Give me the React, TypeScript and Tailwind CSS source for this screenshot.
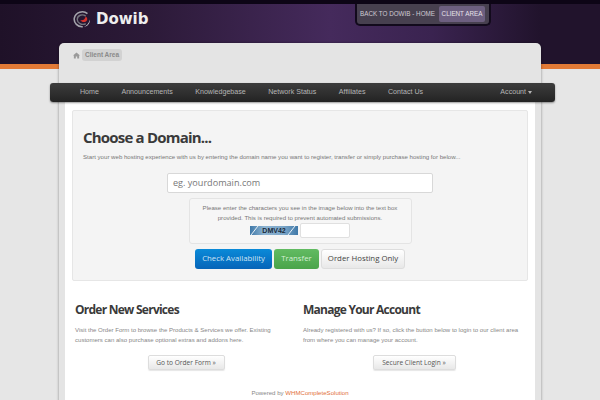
const navLeft = ["Home", "Announcements", "Knowledgebase", "Network Status", "Affiliates", "Contact Us"];

function Logo() {
  return (
    <svg width="17" height="17" viewBox="0 0 20 20" fill="none">
      <path d="M17 3C12 -1 3 1 1.500 8.500c-.8 5.500 4 10.500 10 10" stroke="#a4a4ac" strokeWidth="1.800" />
      <path d="M15 6C11 3 5 5 5 10c0 4 5 7 10 5" stroke="#75757e" strokeWidth="1.600" />
      <path d="M15 6.500c3 2 2 6-1.500 6.500-2.500.2-4-1-5-2.500 2.500 1 5 .5 6.500-4z" fill="#d8322c" />
      <path d="M20 10c0 5-3.500 8.500-7.500 9 3.500-1.500 6-4 7.500-9z" fill="#d4d4d8" />
    </svg>
  );
}

function HomeIcon() {
  return (
    <svg width="7" height="7" viewBox="0 0 8 8" fill="#9a9a9a">
      <path d="M4 .5 0 4h1v3.500h2.200V5h1.600v2.500H7V4h1z" />
    </svg>
  );
}

function Column({ title, lines, button, buttonWidth }: { title: string; lines: string[]; button: string; buttonWidth: string }) {
  return (
    <div>
      <h2 className="text-[12px] leading-[18px] font-bold tracking-[-0.75px] text-[#3a3a3a] font-['Open_Sans',sans-serif]">{title}</h2>
      <p className="mt-[7px] text-[6.05px] leading-[9.5px] whitespace-nowrap text-[#888888]">
        {lines[0]}
        <br />
        {lines[1]}
      </p>
      <div className="mt-[10px] flex w-[222px] justify-center">
        <span className={`flex h-[15px] ${buttonWidth} items-center justify-center rounded-[2px] border border-[#dddddd] bg-[linear-gradient(#ffffff,#e8e8e8)] text-[6.6px] whitespace-nowrap text-[#555555] shadow-[0_1px_1px_rgba(0,0,0,0.1)] font-['Open_Sans',sans-serif]`}>
          {button}
        </span>
      </div>
    </div>
  );
}

export default function App() {
  return (
    <div className="relative h-[400px] w-[600px] overflow-hidden bg-[#e6e6e6] antialiased font-['Liberation_Sans',sans-serif]">
      {/* header band */}
      <div className="box-content h-[64px] border-b-[5px] border-[#e27a36] bg-[linear-gradient(90deg,#1f1128_0%,#2c1a38_25%,#452a5c_55%,#3a2350_72%,#21132c_90%)]">
        <div className="h-[4px] bg-[#0d0516]" />
        <div className="flex items-start">
          <div className="ml-[73px] mt-[5px] flex w-[282px] items-center gap-[6px]">
            <Logo />
            <span className="text-[15px] leading-5 font-bold text-[#eeeeee] font-['DejaVu_Sans',sans-serif]">Dowib</span>
          </div>
          <div className="flex h-[22px] w-[136px] items-center rounded-b-[5px] border-2 border-t-0 border-[#120a1c] bg-[#47404f] pl-[3px] text-[6.3px] uppercase text-[#cfcbd4]">
            <span className="w-[79px] shrink-0 whitespace-nowrap">Back to Dowib - Home</span>
            <span className="flex h-[16px] w-[46px] shrink-0 items-center justify-center rounded-[2px] bg-[#6d5f80] whitespace-nowrap text-[#e6e2ea]">Client Area</span>
          </div>
        </div>
      </div>

      {/* main panel, pulled up over the band */}
      <div className="relative ml-[59px] -mt-[26px] h-[500px] w-[482px] rounded-t-[5px] bg-[#e4e4e4] px-[6px] shadow-[0_0_3px_rgba(0,0,0,0.4)]">
        <div className="flex items-center pt-[6px]">
          <span className="ml-[8px] mr-[2px] flex"><HomeIcon /></span>
          <span className="rounded-[3px] bg-[#d2d2d2] px-[3px] text-[6.5px] leading-[12px] font-bold text-[#8a8a8a]">Client Area</span>
        </div>

        {/* nav */}
        <div className="relative -mx-[15px] mt-[22px] flex h-[19px] w-[505px] items-center gap-[22.5px] rounded-[3px] bg-[linear-gradient(#3d3d3d,#232323)] pl-[30px] pr-[23px] text-[7.1px] whitespace-nowrap text-[#b5b5b5] shadow-[0_1px_2px_rgba(0,0,0,0.4)]">
          {navLeft.map((n) => (
            <span key={n}>{n}</span>
          ))}
          <span className="ml-auto flex items-center gap-[2px]">
            Account
            <span className="h-0 w-0 border-x-[2.5px] border-t-[3px] border-x-transparent border-t-[#b5b5b5]" />
          </span>
        </div>

        {/* content */}
        <div className="h-[400px] bg-white px-[7px] pt-[8px]">
          <div className="h-[171px] rounded-[2px] border border-[#e6e6e6] bg-[#f4f4f4] px-[10px] pt-[16px]">
            <h1 className="text-[15px] leading-[20px] font-bold tracking-[-0.8px] text-[#3a3a3a] font-['Open_Sans',sans-serif]">Choose a Domain...</h1>
            <p className="mt-[6px] text-[6.1px] leading-[8px] whitespace-nowrap text-[#777777]">
              Start your web hosting experience with us by entering the domain name you want to register, transfer or simply purchase hosting for below...
            </p>
            <div className="mt-[12px] flex justify-center">
              <div className="flex h-[20px] w-[266px] items-center rounded-[2px] border border-[#d8d8d8] bg-white px-[5px] text-[9.1px] text-[#777777] font-['Open_Sans',sans-serif]">
                eg. yourdomain.com
              </div>
            </div>
            <div className="mx-auto mt-[5px] h-[46px] w-[223px] rounded-[3px] border border-[#e4e4e4] bg-[#f6f6f6] pt-[4px] text-center text-[6.1px] leading-[10px] whitespace-nowrap text-[#777777]">
              <div>Please enter the characters you see in the image below into the text box</div>
              <div>provided. This is required to prevent automated submissions.</div>
              <div className="flex items-center justify-center gap-[2px]">
                <span className="relative flex h-[9px] w-[48px] items-center justify-center bg-[linear-gradient(90deg,#3f78a8_0%,#8db4d2_30%,#7ba6c8_70%,#3f78a8_100%)] text-[7px] font-bold text-[#1b2a3a]">
                  <svg className="absolute inset-0" width="48" height="9" viewBox="0 0 48 9">
                    <path d="M1 9 8 0M38 9l7-9" stroke="#e8f0f6" strokeWidth="1" />
                  </svg>
                  <span className="relative">DMV42</span>
                </span>
                <span className="h-[15px] w-[50px] rounded-[2px] border border-[#e0e0e0] bg-white" />
              </div>
            </div>
            <div className="mt-[5px] flex justify-center gap-[2px] text-[7.8px] whitespace-nowrap font-['Open_Sans',sans-serif]">
              <span className="flex h-[20px] w-[77px] items-center justify-center rounded-[3px] bg-[linear-gradient(#0a8ad8,#0664b8)] text-[#cfe5f5]">Check Availability</span>
              <span className="flex h-[20px] w-[45px] items-center justify-center rounded-[3px] bg-[linear-gradient(#62bb62,#4aa44a)] text-[#d5efd5]">Transfer</span>
              <span className="flex h-[20px] w-[84px] items-center justify-center rounded-[3px] border border-[#dddddd] bg-[linear-gradient(#ffffff,#e8e8e8)] text-[#444444]">Order Hosting Only</span>
            </div>
          </div>

          <div className="mt-[20px] grid grid-cols-[228px_1fr] px-[3px]">
            <Column
              title="Order New Services"
              lines={["Visit the Order Form to browse the Products & Services we offer. Existing", "customers can also purchase optional extras and addons here."]}
              button="Go to Order Form »"
              buttonWidth="w-[77px]"
            />
            <Column
              title="Manage Your Account"
              lines={["Already registered with us? If so, click the button below to login to our client area", "from where you can manage your account."]}
              button="Secure Client Login »"
              buttonWidth="w-[83px]"
            />
          </div>
          <p className="mt-[18px] text-center text-[6.1px] leading-[10px] text-[#888888]">
            Powered by <span className="text-[#e2703a]">WHMCompleteSolution</span>
          </p>
        </div>
      </div>
    </div>
  );
}
